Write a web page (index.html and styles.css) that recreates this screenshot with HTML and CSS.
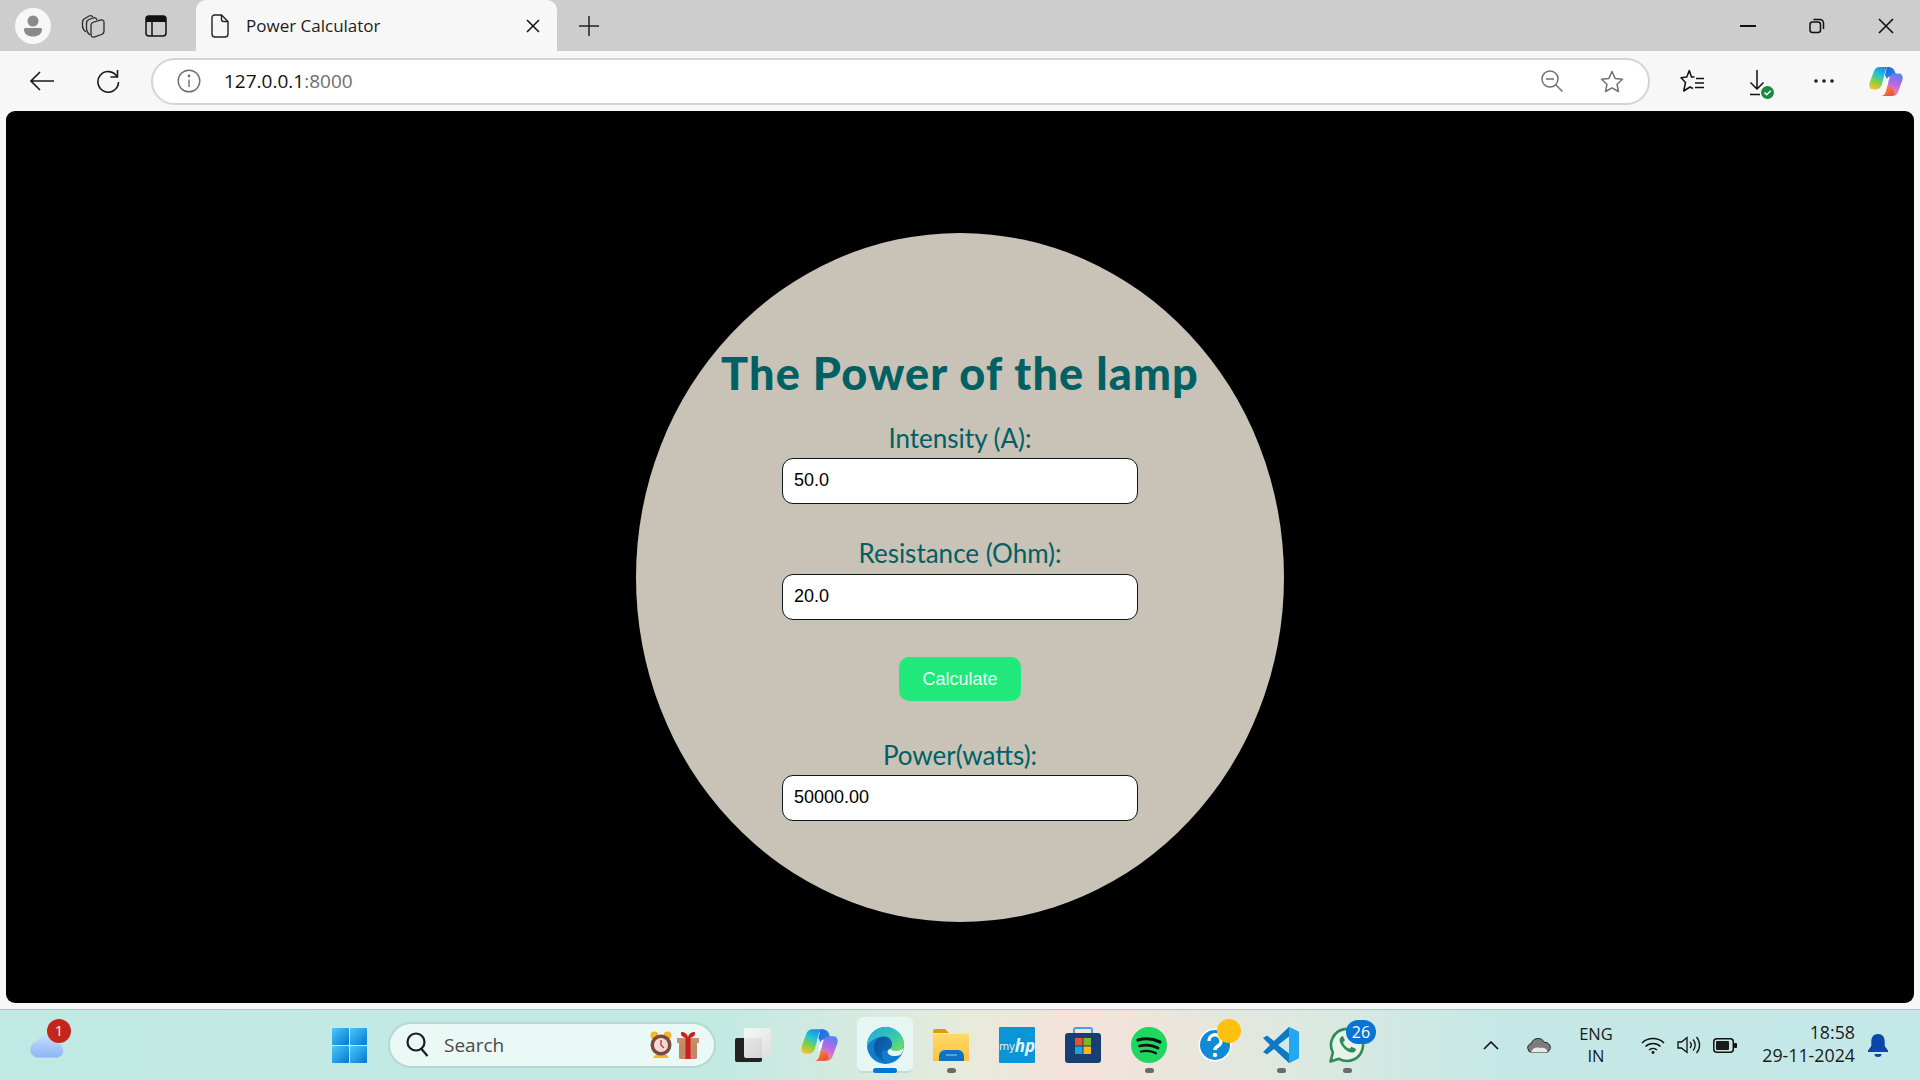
FILE: index.html
```html
<!DOCTYPE html>
<html lang="en">
<head>
<meta charset="utf-8">
<title>Power Calculator</title>
<link rel="stylesheet" href="styles.css">
</head>
<body>
<svg class="defs" width="0" height="0" aria-hidden="true">
  <defs>
    <linearGradient id="cpA" x1="0.6" y1="0" x2="0.2" y2="1"><stop offset="0" stop-color="#1b8fe8"/><stop offset=".35" stop-color="#22c4d8"/><stop offset=".65" stop-color="#7ed048"/><stop offset="1" stop-color="#fbc02d"/></linearGradient>
    <linearGradient id="cpC" x1="0.7" y1="0" x2="0.3" y2="1"><stop offset="0" stop-color="#5a80f0"/><stop offset=".4" stop-color="#b468e8"/><stop offset=".75" stop-color="#f07aa8"/><stop offset="1" stop-color="#f2613a"/></linearGradient>
    <linearGradient id="cpT" x1="0" y1="0" x2="1" y2="1"><stop offset="0" stop-color="#1668d8"/><stop offset="1" stop-color="#3f8cf0"/></linearGradient>
    <linearGradient id="cpR" x1="0" y1="0" x2="1" y2="1"><stop offset="0" stop-color="#f7a23c"/><stop offset="1" stop-color="#ea3f3a"/></linearGradient>
    <linearGradient id="edgeA" x1="0" y1="0" x2="1" y2="1"><stop offset="0" stop-color="#1fa8e0"/><stop offset=".55" stop-color="#34c8b0"/><stop offset="1" stop-color="#7ce052"/></linearGradient>
    <linearGradient id="edgeB" x1="0" y1="0" x2="1" y2="1"><stop offset="0" stop-color="#0a4f98"/><stop offset="1" stop-color="#0f74c4"/></linearGradient>
    <linearGradient id="winG" x1="0" y1="0" x2="1" y2="1"><stop offset="0" stop-color="#4cc8f8"/><stop offset="1" stop-color="#0078d4"/></linearGradient>
    <linearGradient id="fileG" x1="0" y1="0" x2="0" y2="1"><stop offset="0" stop-color="#ffd968"/><stop offset="1" stop-color="#fcc23c"/></linearGradient>
    <linearGradient id="stackG" x1="0" y1="0" x2="1" y2="1"><stop offset="0" stop-color="#fafafa"/><stop offset="1" stop-color="#dedede"/></linearGradient>
    <linearGradient id="cloudG" x1="0" y1="0" x2="0" y2="1"><stop offset="0" stop-color="#c4dcfb"/><stop offset="1" stop-color="#8cb6f4"/></linearGradient>
    <g id="copilot">
      <path d="M18 1c5 0 7 1.500 8 5l2 5-8 6-4-8z" fill="url(#cpT)"/>
      <path d="M23.500 30H12c3 0 4.300-2 5-4.500L20 13c1-4 3.500-5.500 7-5.500h2.500c3.500 0 5 3 3.800 6.800L29 26c-1 2.500-3 4-5.500 4z" fill="url(#cpC)"/>
      <path d="M12 30c3 0 4.300-2 5-4.500l1.500-5.500 5.500 3 1 4c-.5 2-2 3-4 3z" fill="url(#cpR)"/>
      <path d="M10.500 1H21c-2.800 0-4 2-4.800 4.500L13 18c-1 4-3.500 5.500-6.500 5.500H4.500C1 23.500-.5 20.500.7 16.700L5 5C6 2.500 8 1 10.500 1z" fill="url(#cpA)"/>
      <path d="M15.500 21l2.500-8c.5-1.500 1.300-2.500 3-2.500l-2.500 8c-.5 1.500-1.300 2.500-3 2.500z" fill="#fff" opacity=".92"/>
    </g>
  </defs>
</svg>

<header class="tabstrip">
  <div class="cell cell-avatar">
    <span class="avatar">
      <svg width="20" height="24" viewBox="0 0 20 24"><circle cx="10" cy="7" r="5.500" fill="#8a8a8a"/><path d="M1 15.500c0-1 .8-1.500 1.800-1.500h14.400c1 0 1.800.5 1.800 1.500 0 4.500-4 7-9 7s-9-2.500-9-7z" fill="#8a8a8a"/></svg>
    </span>
  </div>
  <div class="cell cell-coll">
    <svg width="24" height="24" viewBox="0 0 24 24" fill="none" stroke="#2a2a2a" stroke-width="1.300"><path d="M5 18C2.500 16 1.500 14 1.500 12V8Q1.500 5.500 4 4.500L8 2Q10.500 1 12 3"/><path d="M9 21C6.500 19 5.500 17 5.500 14V9Q5.500 6.500 8 5.500L12 4Q15 3 16 6"/><path d="M11.500 8.500L20 6Q23 5.500 23 8.500V17Q23 19.500 20.500 20.500L13 23Q10 23.500 10 20.500V11.500Q10 9.500 11.500 8.500z"/></svg>
  </div>
  <div class="cell cell-tabs">
    <svg width="22" height="22" viewBox="0 0 22 22"><rect x="1" y="1" width="20" height="20" rx="3" fill="none" stroke="#111" stroke-width="1.500"/><path d="M1 4a3 3 0 0 1 3-3h14a3 3 0 0 1 3 3v3H1z" fill="#111"/><path d="M7 7v14" stroke="#111" stroke-width="1.500"/></svg>
  </div>
  <div class="tab">
    <svg class="tab-doc" width="18" height="24" viewBox="0 0 18 24" fill="none" stroke="#222" stroke-width="1.400"><path d="M3.500 1h7L17 7.500V20a3 3 0 0 1-3 3H4a3 3 0 0 1-3-3V3.500A2.500 2.500 0 0 1 3.500 1z"/><path d="M10.500 1v4.500a2 2 0 0 0 2 2H17"/></svg>
    <span class="tab-title">Power Calculator</span>
    <svg class="tab-close" width="14" height="14" viewBox="0 0 14 14" stroke="#111" stroke-width="1.500"><path d="M1 1l12 12M13 1L1 13"/></svg>
  </div>
  <div class="cell cell-plus">
    <svg width="20" height="20" viewBox="0 0 20 20" stroke="#222" stroke-width="1.500"><path d="M10 0v20M0 10h20"/></svg>
  </div>
  <div class="spacer"></div>
  <div class="win-btn">
    <svg width="16" height="2" viewBox="0 0 16 2"><path d="M0 1h16" stroke="#111" stroke-width="2"/></svg>
  </div>
  <div class="win-btn">
    <svg width="16" height="16" viewBox="0 0 16 16" fill="none" stroke="#111" stroke-width="1.500"><rect x="1" y="4" width="10.500" height="10.500" rx="2.500"/><path d="M4.500 1.500h6.500a3.500 3.500 0 0 1 3.500 3.500v6"/></svg>
  </div>
  <div class="win-btn">
    <svg width="16" height="16" viewBox="0 0 16 16" stroke="#111" stroke-width="1.600"><path d="M1 1l14 14M15 1L1 15"/></svg>
  </div>
</header>

<nav class="toolbar">
  <div class="tool tool-back">
    <svg width="24" height="20" viewBox="0 0 24 20" fill="none" stroke="#1a1a1a" stroke-width="1.600"><path d="M24 10H1M10 1l-9 9 9 9"/></svg>
  </div>
  <div class="tool tool-reload">
    <svg width="24" height="24" viewBox="0 0 24 24" fill="none" stroke="#1a1a1a" stroke-width="1.600"><path d="M21 7.500A10.300 10.300 0 1 0 22.500 13"/><path d="M21.500 1v7h-7"/></svg>
  </div>
  <div class="addr">
    <svg class="addr-info" width="24" height="24" viewBox="0 0 24 24" fill="none" stroke="#6f6f6f" stroke-width="1.400"><circle cx="12" cy="12" r="10.800"/><path d="M12 10.500V18"/><circle cx="12" cy="7" r=".7" fill="#6f6f6f"/></svg>
    <span class="url"><span class="url-host">127.0.0.1</span><span class="url-port">:8000</span></span>
    <span class="spacer"></span>
    <svg class="addr-zoom" width="22" height="22" viewBox="0 0 22 22" fill="none" stroke="#707070" stroke-width="1.500"><circle cx="9" cy="9" r="8"/><path d="M5 9h8M14.500 14.500L21.500 21.500"/></svg>
    <svg class="addr-star" width="24" height="23" viewBox="0 0 24 23" fill="none" stroke="#707070" stroke-width="1.500" stroke-linejoin="round"><path d="M12 1.500l3.100 6.900 7.400.8-5.500 5 1.500 7.300-6.500-3.700-6.500 3.700L7 14.200l-5.500-5 7.400-.8z"/></svg>
  </div>
  <div class="tool tool-fav">
    <svg width="24" height="24" viewBox="0 0 24 24" fill="none" stroke="#111" stroke-width="1.500" stroke-linejoin="round"><path d="M14.500 8H11.500L9.300 1.500 6.800 8 1 8.700l4.500 4.800L3.700 22 10 18l3 1.500"/><path d="M16 9.500h8M15 14h9M15 18.500h9"/></svg>
  </div>
  <div class="tool tool-down">
    <svg width="26" height="30" viewBox="0 0 26 30" fill="none"><path d="M8 0v19M1.500 12.500L8 19l6.500-6.500M1 24.500h10" stroke="#111" stroke-width="1.500"/><circle cx="18.500" cy="22.500" r="6.500" fill="#1b8a3c"/><path d="M15.500 22.500l2.200 2.200 4-4" stroke="#fff" stroke-width="1.600"/></svg>
  </div>
  <div class="tool tool-more">
    <svg width="20" height="4" viewBox="0 0 20 4" fill="#1a1a1a"><circle cx="2" cy="2" r="1.800"/><circle cx="10" cy="2" r="1.800"/><circle cx="18" cy="2" r="1.800"/></svg>
  </div>
  <div class="tool tool-copilot">
    <svg width="34" height="31" viewBox="0 0 34 31"><use href="#copilot"/></svg>
  </div>
</nav>

<main class="frame">
  <div class="viewport">
    <section class="disc">
      <h1 class="title">The Power of the lamp</h1>
      <form class="calc">
        <label class="field-label" for="intensity">Intensity (A):</label>
        <input class="field" id="intensity" type="text" value="50.0">
        <label class="field-label field-label-next" for="resistance">Resistance (Ohm):</label>
        <input class="field" id="resistance" type="text" value="20.0">
        <button class="calc-btn" type="button">Calculate</button>
        <label class="field-label" for="power">Power(watts):</label>
        <input class="field" id="power" type="text" value="50000.00">
      </form>
    </section>
  </div>
</main>

<footer class="taskbar">
  <div class="weather">
    <svg width="38" height="24" viewBox="0 0 38 24"><path d="M9 23.500a8 8 0 0 1-1-15.900 11 11 0 0 1 20.500 1.500A7.500 7.500 0 0 1 29 23.500z" fill="url(#cloudG)"/></svg>
    <span class="weather-badge">1</span>
  </div>
  <div class="start">
    <svg width="35" height="35" viewBox="0 0 35 35" fill="url(#winG)"><rect width="17" height="17" rx="1"/><rect x="18" width="17" height="17" rx="1"/><rect y="18" width="17" height="17" rx="1"/><rect x="18" y="18" width="17" height="17" rx="1"/></svg>
  </div>
  <div class="search">
    <svg class="search-glass" width="24" height="26" viewBox="0 0 24 26" fill="none" stroke="#1a1a1a" stroke-width="2.200"><circle cx="10" cy="10" r="8.500"/><path d="M15.500 17l6 7"/></svg>
    <span class="search-text">Search</span>
    <span class="spacer"></span>
    <svg class="search-clock" width="22" height="28" viewBox="0 0 22 28"><circle cx="4.500" cy="4.500" r="4" fill="#f3b62e"/><circle cx="17.500" cy="4.500" r="4" fill="#f3b62e"/><path d="M5 24h12l2 3H3z" fill="#f3b62e"/><circle cx="11" cy="14" r="10.500" fill="#7d4a42"/><circle cx="11" cy="14" r="7" fill="#f2dbd6"/><path d="M11 9v5l3 3" stroke="#c0392b" stroke-width="1.400" fill="none"/></svg>
    <svg class="search-gift" width="22" height="28" viewBox="0 0 22 28"><rect x="2" y="8" width="18" height="20" rx="1.500" fill="#c08a68"/><rect x="0" y="7" width="22" height="5" fill="#c78f6c"/><rect x="8.500" y="7" width="5" height="21" fill="#cc1f1a"/><path d="M11 7C7 7 3 5 4 1.500 7 0 10 3 11 6c1-3 4-6 7-4.500C19 5 15 7 11 7z" fill="#cc1f1a"/></svg>
  </div>
  <div class="apps">
    <div class="app">
      <svg width="36" height="34" viewBox="0 0 36 34"><rect x="0" y="10" width="27" height="24" rx="2" fill="#222"/><rect x="9" y="0" width="27" height="30" rx="2" fill="url(#stackG)" opacity=".93"/></svg>
    </div>
    <div class="app">
      <svg width="37" height="34" viewBox="0 0 34 31"><use href="#copilot"/></svg>
    </div>
    <div class="app app-active">
      <svg width="37" height="37" viewBox="0 0 37 37"><circle cx="18.500" cy="18.500" r="18.500" fill="#0f7ed0"/><path d="M18.500 0C29 0 37 8 37 17.500c0 4-3 6.500-7.500 6.500-3 0-5.500-1-6.500-2.500 1.500-1 2-2.500 2-4C25 13 21.500 9.500 16.500 9.500 8 9.500 2 15 0 20 0 8.500 8 0 18.500 0z" fill="url(#edgeA)"/><path d="M16.500 9.500c5 0 8.500 3.500 8.500 8 0 1.500-.5 3-2 4-3.500 2.500-7 1-8 4-1 4 2 8 5 10.500-8-2-13-8.500-13-15.500 0-5.500 3.500-10.500 9.500-11z" fill="url(#edgeB)"/><path d="M23 21.500c1 1.500 3.500 2.500 6.500 2.500 3 0 5.500-1.200 7.500-3.500-.8 3-2 5.500-3.800 7.500-3.500 1.500-8.500 1.500-11.200-.5-2-1.500-2-4.500 1.500-6z" fill="#e6f6f3"/></svg>
      <span class="active-bar"></span>
    </div>
    <div class="app">
      <svg width="36" height="34" viewBox="0 0 36 34"><path d="M0 3a2 2 0 0 1 2-2h10l4 4H0z" fill="#d99c10"/><path d="M0 6h36v27H0z" fill="url(#fileG)"/><path d="M6 33V28a6 6 0 0 1 6-6h13a6 6 0 0 1 6 6v5z" fill="#0f72c4"/><path d="M13 27h11" stroke="#63b5ee" stroke-width="1.500"/></svg>
      <span class="app-dot"></span>
    </div>
    <div class="app">
      <div class="myhp"><span class="myhp-my">my</span><span class="myhp-hp">hp</span></div>
    </div>
    <div class="app">
      <svg width="36" height="36" viewBox="0 0 36 36"><path d="M9 7V3a2 2 0 0 1 2-2h14a2 2 0 0 1 2 2v4" fill="none" stroke="#3ca6e0" stroke-width="2"/><rect y="6" width="36" height="30" rx="3" fill="#173f73"/><rect x="10" y="11" width="7.500" height="7.500" fill="#e8512a"/><rect x="18.500" y="11" width="7.500" height="7.500" fill="#7fba20"/><rect x="10" y="19.500" width="7.500" height="7.500" fill="#19a2e8"/><rect x="18.500" y="19.500" width="7.500" height="7.500" fill="#fdb900"/></svg>
    </div>
    <div class="app">
      <svg width="36" height="36" viewBox="0 0 36 36"><circle cx="18" cy="18" r="18" fill="#1ed760"/><g fill="none" stroke="#111" stroke-linecap="round"><path d="M7 13c7-2 15-1.500 22 2" stroke-width="3.200"/><path d="M8.500 19c6-1.600 13-1 18.500 2" stroke-width="2.700"/><path d="M10 24.500c5-1.200 10.500-.8 15 1.800" stroke-width="2.200"/></g></svg>
      <span class="app-dot"></span>
    </div>
    <div class="app">
      <div class="help">
        <svg width="34" height="34" viewBox="0 0 34 34"><circle cx="17" cy="17" r="16.500" fill="#fff"/><circle cx="17" cy="17" r="15" fill="#0f8ad6"/><path d="M11 13a6 6 0 1 1 9 5c-2 1.300-3 2-3 4" fill="none" stroke="#fff" stroke-width="3.400"/><circle cx="17" cy="27" r="2.200" fill="#fff"/></svg>
        <span class="help-dot"></span>
      </div>
    </div>
    <div class="app">
      <svg width="36" height="36" viewBox="0 0 36 36"><path d="M26 0l10 5v26l-10 5-15-14-7 5.500L0 25l7-7-7-7 4-2.500L11 14z" fill="#0e78c2"/><path d="M26 0l10 5v26l-10 5z" fill="#26a6ee"/><path d="M26 9.500v17L15 18z" fill="#cbe9ec"/></svg>
      <span class="app-dot"></span>
    </div>
    <div class="app">
      <div class="wa">
        <svg width="36" height="36" viewBox="0 0 36 36"><path d="M1.500 34.500l2.400-9A16 16 0 1 1 10 31.800z" fill="#e5f3ea" stroke="#2e8b57" stroke-width="2.600" stroke-linejoin="round"/><path d="M12 10c-2 1.500-2 5 1.500 9.500S21 26 24 25.500c2-.5 3-2 3-3.500l-4.500-2.200-2 2c-3-1-5.500-3.500-6.500-6.500l2-2L13.800 9z" fill="#2e8b57"/></svg>
        <span class="wa-badge">26</span>
      </div>
      <span class="app-dot"></span>
    </div>
  </div>
  <div class="tray">
    <svg class="tray-chev" width="16" height="9" viewBox="0 0 16 9" fill="none" stroke="#111" stroke-width="1.600"><path d="M1 8l7-7 7 7"/></svg>
    <svg class="tray-drive" width="24" height="16" viewBox="0 0 24 16"><path d="M5 15.500a4.500 4.500 0 0 1-.7-8.900 7 7 0 0 1 13-1.200 5 5 0 0 1 1.700 10.100z" fill="#7c7c7c" stroke="#222" stroke-width="1"/><path d="M4 15.500c1-4 5-6 9-4.500 3-1 7 0 7.500 3.500-.5.700-1 1-1.500 1z" fill="#e8e8e8"/></svg>
    <div class="lang"><span>ENG</span><span>IN</span></div>
    <svg class="tray-wifi" width="24" height="17" viewBox="0 0 24 17" fill="none" stroke="#111" stroke-width="1.500"><path d="M1 6a16 16 0 0 1 22 0M4.500 9.500a11 11 0 0 1 15 0M8 13a6 6 0 0 1 8 0"/><circle cx="12" cy="15.500" r="1.400" fill="#111" stroke="none"/></svg>
    <svg class="tray-vol" width="24" height="18" viewBox="0 0 24 18" fill="none" stroke="#111" stroke-width="1.300"><path d="M1 6h3.500L10 1.500v15L4.500 12H1z"/><path d="M13 6a4.500 4.500 0 0 1 0 6M16 3.500a8 8 0 0 1 0 11M19.500 1a12 12 0 0 1 0 16"/></svg>
    <svg class="tray-batt" width="24" height="15" viewBox="0 0 24 15"><rect x=".8" y=".8" width="19.500" height="13.400" rx="3" fill="none" stroke="#111" stroke-width="1.500"/><rect x="3" y="3" width="13" height="9" rx="1" fill="#1a1a1a"/><rect x="21" y="5" width="3" height="5" rx="1" fill="#111"/></svg>
    <div class="clock"><span>18:58</span><span>29-11-2024</span></div>
    <svg class="tray-bell" width="20" height="23" viewBox="0 0 20 23" fill="#0b46a8"><path d="M10 0c4.500 0 6.700 3.300 6.700 7.500V12l3.300 4.500V18H0v-1.500L3.300 12V7.500C3.300 3.300 5.500 0 10 0z"/><path d="M6.500 20h7a3.500 3 0 0 1-7 0z"/></svg>
  </div>
</footer>
</body>
</html>
```
FILE: styles.css
```css
* { box-sizing: border-box; }
html, body { margin: 0; height: 100%; }
body {
  width: 1920px;
  height: 1080px;
  overflow: hidden;
  display: flex;
  flex-direction: column;
  background: #f7f7f7;
  font-family: "Open Sans", "Liberation Sans", sans-serif;
}
.defs { position: absolute; }
.spacer { flex: 1; }

/* tab strip */
.tabstrip {
  height: 51px;
  flex: none;
  display: flex;
  align-items: stretch;
  background: #cdcdcd;
}
.cell { display: flex; align-items: center; justify-content: center; flex: none; }
.cell-avatar { width: 66px; }
.cell-coll { width: 54px; }
.cell-tabs { width: 72px; }
.cell-plus { width: 64px; }
.avatar {
  width: 36px;
  height: 36px;
  border-radius: 50%;
  background: #f7f7f7;
  display: flex;
  align-items: center;
  justify-content: center;
}
.tab {
  width: 361px;
  margin-left: 4px;
  flex: none;
  display: flex;
  align-items: center;
  padding: 0 17px 0 15px;
  background: #f7f7f7;
  border-radius: 10px 10px 0 0;
}
.tab-title {
  margin-left: 17px;
  font-size: 17px;
  color: #1c1c1c;
  white-space: nowrap;
  flex: 1;
}
.win-btn { width: 69px; display: flex; align-items: center; justify-content: center; flex: none; }

/* toolbar */
.toolbar {
  height: 60px;
  flex: none;
  display: flex;
  align-items: center;
  padding: 0 0 0 9px;
  background: #f7f7f7;
}
.tool { display: flex; align-items: center; justify-content: center; flex: none; }
.tool-back { width: 66px; }
.tool-reload { width: 66px; }
.tool-fav { width: 84px; }
.tool-down { width: 56px; padding-top: 7px; }
.tool-more { width: 68px; }
.tool-copilot { width: 56px; }
.addr {
  width: 1499px;
  height: 47px;
  margin-left: 10px;
  flex: none;
  display: flex;
  align-items: center;
  padding: 0 24px 0 24px;
  background: #fff;
  border: 2px solid #d4d4d4;
  border-radius: 24px;
}
.url { margin-left: 23px; font-size: 19px; }
.url-host { color: #111; }
.url-port { color: #6e6e6e; }
.addr-star { margin-left: 37px; }

/* page */
.frame {
  height: 898px;
  flex: none;
  padding: 0 6px 6px;
  background: #f7f7f7;
}
.viewport {
  height: 892px;
  background: #000;
  border-radius: 9px;
  display: flex;
  justify-content: center;
  align-items: flex-start;
  padding-top: 122px;
}
.disc {
  width: 648px;
  height: 689px;
  flex: none;
  padding-top: 116px;
  background: #c9c2b6;
  border-radius: 50%;
  display: flex;
  flex-direction: column;
  align-items: center;
}
.title {
  margin: 0 0 31px;
  height: 48px;
  font-family: Lato, "Open Sans", sans-serif;
  font-size: 45px;
  line-height: 48px;
  font-weight: 900;
  letter-spacing: 1.15px;
  color: #006064;
  white-space: nowrap;
}
.calc { display: flex; flex-direction: column; align-items: center; width: 356px; }
.field-label {
  height: 30px;
  font-family: Lato, "Open Sans", sans-serif;
  font-size: 26px;
  line-height: 21px;
  color: #006064;
  white-space: nowrap;
}
.field-label-next { margin-top: 39px; margin-bottom: 1px; }
.field {
  width: 356px;
  height: 46px;
  padding: 0 11px 1px;
  border: 1px solid #0a1a1a;
  border-radius: 11px;
  background: #fff;
  color: #000;
  font-family: "Liberation Sans", Arial, sans-serif;
  font-size: 18px;
}
.calc-btn {
  width: 122px;
  height: 44px;
  margin: 37px 0 44px;
  border: 0;
  border-radius: 10px;
  background: #20e87a;
  color: #e6fff4;
  font-family: "Liberation Sans", Arial, sans-serif;
  font-size: 18px;
}

/* taskbar */
.taskbar {
  height: 71px;
  flex: none;
  display: flex;
  align-items: center;
  border-top: 1px solid #a8c4c0;
  background: linear-gradient(90deg, #c1e9e3 0%, #c3e9e3 38%, #e6ebdc 50%, #f5e2da 56%, #dce9e0 68%, #c5e8e6 78%, #c4e8e7 100%);
}
.weather { position: relative; width: 38px; margin-left: 29px; flex: none; height: 24px; margin-top: 2px; }
.weather-badge {
  position: absolute;
  left: 18px;
  top: -15px;
  width: 24px;
  height: 24px;
  border-radius: 50%;
  background: #c4261c;
  color: #fff;
  font-size: 14px;
  line-height: 24px;
  text-align: center;
}
.start { margin-left: 265px; flex: none; display: flex; }
.search {
  width: 328px;
  height: 46px;
  margin-left: 21px;
  flex: none;
  display: flex;
  align-items: center;
  padding: 0 15px 0 16px;
  border: 2px solid #b4d8d2;
  border-radius: 23px;
  background: #eaf8f6;
}
.search-text { margin-left: 14px; font-size: 19px; color: #4a4a4a; }
.search-gift { margin-left: 5px; }
.apps { display: flex; margin-left: 4px; flex: none; }
.app {
  position: relative;
  width: 66px;
  height: 56px;
  flex: none;
  display: flex;
  align-items: center;
  justify-content: center;
}
.app-active::before {
  content: "";
  position: absolute;
  left: 5px;
  right: 5px;
  top: 0;
  bottom: 0;
  background: #e6f6f3;
  border-radius: 6px;
  border-bottom: 2px solid #c4dcd8;
}
.app-active svg { position: relative; }
.active-bar {
  position: absolute;
  left: 21px;
  bottom: 0;
  width: 24px;
  height: 5px;
  border-radius: 3px;
  background: #0078d4;
}
.app-dot {
  position: absolute;
  left: 29px;
  bottom: 0;
  width: 9px;
  height: 5px;
  border-radius: 3px;
  background: #6a6a6a;
}
.myhp {
  width: 36px;
  height: 36px;
  background: #0a96d6;
  border-radius: 1px;
  display: flex;
  align-items: center;
  justify-content: center;
  color: #e8f6fc;
  font-size: 11px;
}
.myhp-hp { font-size: 17px; font-style: italic; font-weight: 700; }
.help, .wa { position: relative; width: 36px; height: 36px; display: flex; align-items: center; justify-content: center; }
.help-dot {
  position: absolute;
  left: 20px;
  top: -8px;
  width: 24px;
  height: 24px;
  border-radius: 50%;
  background: #ffc10e;
}
.wa-badge {
  position: absolute;
  left: 17px;
  top: -7px;
  width: 30px;
  height: 24px;
  border-radius: 12px;
  background: #0a74d6;
  color: #fff;
  font-size: 16px;
  line-height: 24px;
  text-align: center;
}
.tray {
  flex: 1;
  display: flex;
  align-items: center;
  color: #1a1a1a;
}
.tray-chev { margin-left: 103px; }
.tray-drive { margin-left: 28px; }
.lang {
  width: 44px;
  margin-left: 23px;
  display: flex;
  flex-direction: column;
  align-items: center;
  font-size: 16.500px;
  line-height: 22px;
}
.tray-wifi { margin-left: 23px; }
.tray-vol { margin-left: 12px; }
.tray-batt { margin-left: 12px; }
.clock {
  width: 118px;
  margin-top: -3px;
  display: flex;
  flex-direction: column;
  align-items: flex-end;
  font-size: 17.800px;
  line-height: 23px;
}
.tray-bell { margin-left: 13px; }
```
